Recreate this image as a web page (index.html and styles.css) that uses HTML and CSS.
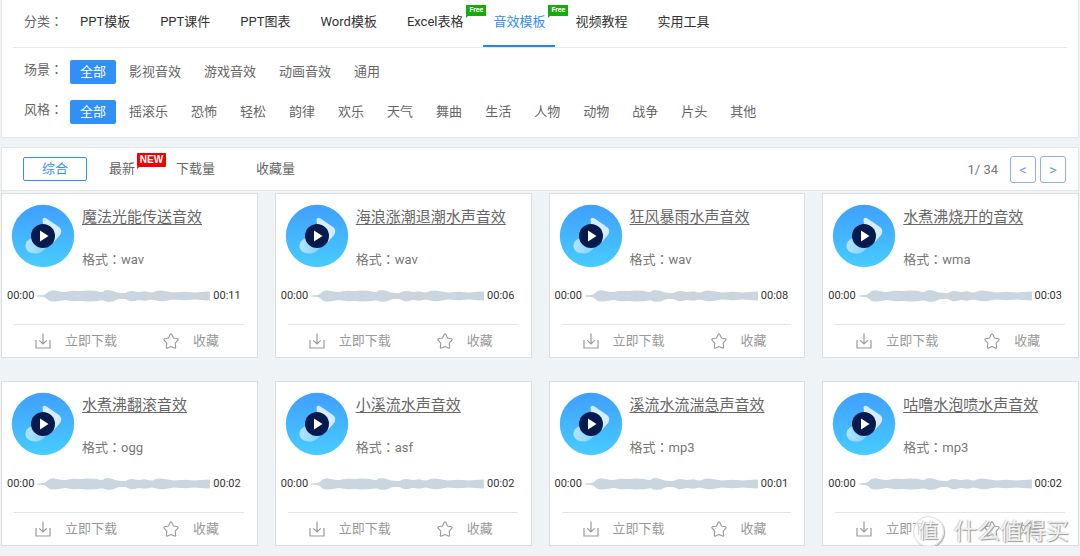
FILE: index.html
```html
<!DOCTYPE html>
<html lang="zh-CN">
<head>
<meta charset="utf-8">
<meta name="viewport" content="width=device-width, initial-scale=1">
<title>音效模板</title>
<link rel="stylesheet" href="styles.css">
</head>
<body>
<svg class="defs" aria-hidden="true">
  <defs>
    <linearGradient id="disc-fill" x1="0" y1="0" x2="0" y2="1">
      <stop offset="0" stop-color="#409fff"/>
      <stop offset="1" stop-color="#47ccff"/>
    </linearGradient>
    <linearGradient id="note-low" x1="1" y1="0" x2="0" y2="0">
      <stop offset="0" stop-color="#7fd0ff"/>
      <stop offset="1" stop-color="#b3e4ff"/>
    </linearGradient>
    <symbol id="disc" viewBox="0 0 64 64">
      <circle cx="32" cy="32" r="31.2" fill="url(#disc-fill)"/>
      <path d="M14.500 42c0-5 4-8 9-8l11 5c2 1 2 2 1 4-3 4-6 6.500-11 6.500-6 0-10-3-10-7.500z" fill="url(#note-low)"/>
      <path d="M31.500 16c0-2 2-3 4-1.500l12.500 8.500c2.500 2 3 5 1 8l-6 7-10-11z" fill="#d5edff"/>
      <circle cx="32" cy="32" r="12" fill="#061a4e"/>
      <path d="M29 26.600v10.800l8.500-5.400z" fill="#fff"/>
    </symbol>
    <symbol id="wave" viewBox="0 0 172 12" preserveAspectRatio="none">
      <path fill="#c9d6df" d="M0 5.500L6 5Q9 4.500 10 3 12 .2 16 .3L20 1Q24 2 28 2 32 1 36 .8L44 1 50 .6 58 .8Q62 2 65 2 67 .1 70 .1 75 .4 78 2 81 3 88 3 91 .8 95 .9L101 2 108 1.300Q111 2.500 115 2.500 119 .3 123 .5L130 1.500 136 2.500 147 1.800 157 2.500 166 1.800 172 1.500V10.500L166 10.200 157 9.500 147 10.200 136 9.500 130 10.500Q126 11.600 122 11.300L114 9.500 108 10.700 101 10Q96 11.400 93 11.200L88 9H82Q78 10 76 11.200 71 12 69 11.700L65 10.200 58 11.300 50 11.500 44 11 36 11.200 28 10 20 11.200Q14 12 12 10.700L10 9Q9 7.500 6 7L0 6.500z"/>
    </symbol>
    <symbol id="download" viewBox="0 0 16 16">
      <path d="M1 7v8h14V7M8 .5v10.300M4.300 7.300L8 11l3.700-3.700" fill="none" stroke="#999" stroke-width="1.200"/>
    </symbol>
    <symbol id="star" viewBox="0 0 16 16">
      <path d="M7.300 1.300q.7-.9 1.400 0L10.500 5l4 .8q1.100.4.4 1.400l-2.700 3 .5 4q0 1.200-1.100.9L8 13.400l-3.600 1.700q-1.100.3-1.100-.9l.5-4-2.700-3q-.7-1 .4-1.400l4-.8z" fill="none" stroke="#999" stroke-width="1.100" stroke-linejoin="round"/>
    </symbol>
  </defs>
</svg>

<section class="filters">
  <nav class="filter-row categories">
    <span class="label">分类<span class="colon">：</span></span>
    <a class="tab" href="#">PPT模板</a>
    <a class="tab" href="#">PPT课件</a>
    <a class="tab" href="#">PPT图表</a>
    <a class="tab" href="#">Word模板</a>
    <a class="tab" href="#">Excel表格<span class="badge free">Free</span></a>
    <a class="tab active" href="#">音效模板<span class="badge free">Free</span></a>
    <a class="tab" href="#">视频教程</a>
    <a class="tab" href="#">实用工具</a>
  </nav>
  <nav class="filter-row">
    <span class="label">场景<span class="colon">：</span></span>
    <a class="chip active" href="#">全部</a>
    <a class="chip" href="#">影视音效</a>
    <a class="chip" href="#">游戏音效</a>
    <a class="chip" href="#">动画音效</a>
    <a class="chip" href="#">通用</a>
  </nav>
  <nav class="filter-row">
    <span class="label">风格<span class="colon">：</span></span>
    <a class="chip active" href="#">全部</a>
    <a class="chip" href="#">摇滚乐</a>
    <a class="chip" href="#">恐怖</a>
    <a class="chip" href="#">轻松</a>
    <a class="chip" href="#">韵律</a>
    <a class="chip" href="#">欢乐</a>
    <a class="chip" href="#">天气</a>
    <a class="chip" href="#">舞曲</a>
    <a class="chip" href="#">生活</a>
    <a class="chip" href="#">人物</a>
    <a class="chip" href="#">动物</a>
    <a class="chip" href="#">战争</a>
    <a class="chip" href="#">片头</a>
    <a class="chip" href="#">其他</a>
  </nav>
</section>

<section class="sortbar">
  <a class="sort active" href="#">综合</a>
  <a class="sort" href="#">最新<span class="badge new">NEW</span></a>
  <a class="sort" href="#">下载量</a>
  <a class="sort" href="#">收藏量</a>
  <div class="pager">
    <span class="page">1/ 34</span>
    <button class="page-btn" type="button" aria-label="上一页">&lt;</button>
    <button class="page-btn" type="button" aria-label="下一页">&gt;</button>
  </div>
</section>

<main class="cards">
  <article class="card">
    <div class="head">
      <button class="play" type="button" aria-label="播放"><svg class="disc"><use href="#disc"/></svg></button>
      <div class="info"><a class="title" href="#">魔法光能传送音效</a><p class="format">格式<span class="colon">：</span>wav</p></div>
    </div>
    <div class="track"><span>00:00</span><svg class="wave"><use href="#wave"/></svg><span>00:11</span></div>
    <div class="actions">
      <button class="action" type="button"><svg class="icon"><use href="#download"/></svg>立即下载</button>
      <button class="action" type="button"><svg class="icon"><use href="#star"/></svg>收藏</button>
    </div>
  </article>
  <article class="card">
    <div class="head">
      <button class="play" type="button" aria-label="播放"><svg class="disc"><use href="#disc"/></svg></button>
      <div class="info"><a class="title" href="#">海浪涨潮退潮水声音效</a><p class="format">格式<span class="colon">：</span>wav</p></div>
    </div>
    <div class="track"><span>00:00</span><svg class="wave"><use href="#wave"/></svg><span>00:06</span></div>
    <div class="actions">
      <button class="action" type="button"><svg class="icon"><use href="#download"/></svg>立即下载</button>
      <button class="action" type="button"><svg class="icon"><use href="#star"/></svg>收藏</button>
    </div>
  </article>
  <article class="card">
    <div class="head">
      <button class="play" type="button" aria-label="播放"><svg class="disc"><use href="#disc"/></svg></button>
      <div class="info"><a class="title" href="#">狂风暴雨水声音效</a><p class="format">格式<span class="colon">：</span>wav</p></div>
    </div>
    <div class="track"><span>00:00</span><svg class="wave"><use href="#wave"/></svg><span>00:08</span></div>
    <div class="actions">
      <button class="action" type="button"><svg class="icon"><use href="#download"/></svg>立即下载</button>
      <button class="action" type="button"><svg class="icon"><use href="#star"/></svg>收藏</button>
    </div>
  </article>
  <article class="card">
    <div class="head">
      <button class="play" type="button" aria-label="播放"><svg class="disc"><use href="#disc"/></svg></button>
      <div class="info"><a class="title" href="#">水煮沸烧开的音效</a><p class="format">格式<span class="colon">：</span>wma</p></div>
    </div>
    <div class="track"><span>00:00</span><svg class="wave"><use href="#wave"/></svg><span>00:03</span></div>
    <div class="actions">
      <button class="action" type="button"><svg class="icon"><use href="#download"/></svg>立即下载</button>
      <button class="action" type="button"><svg class="icon"><use href="#star"/></svg>收藏</button>
    </div>
  </article>
  <article class="card">
    <div class="head">
      <button class="play" type="button" aria-label="播放"><svg class="disc"><use href="#disc"/></svg></button>
      <div class="info"><a class="title" href="#">水煮沸翻滚音效</a><p class="format">格式<span class="colon">：</span>ogg</p></div>
    </div>
    <div class="track"><span>00:00</span><svg class="wave"><use href="#wave"/></svg><span>00:02</span></div>
    <div class="actions">
      <button class="action" type="button"><svg class="icon"><use href="#download"/></svg>立即下载</button>
      <button class="action" type="button"><svg class="icon"><use href="#star"/></svg>收藏</button>
    </div>
  </article>
  <article class="card">
    <div class="head">
      <button class="play" type="button" aria-label="播放"><svg class="disc"><use href="#disc"/></svg></button>
      <div class="info"><a class="title" href="#">小溪流水声音效</a><p class="format">格式<span class="colon">：</span>asf</p></div>
    </div>
    <div class="track"><span>00:00</span><svg class="wave"><use href="#wave"/></svg><span>00:02</span></div>
    <div class="actions">
      <button class="action" type="button"><svg class="icon"><use href="#download"/></svg>立即下载</button>
      <button class="action" type="button"><svg class="icon"><use href="#star"/></svg>收藏</button>
    </div>
  </article>
  <article class="card">
    <div class="head">
      <button class="play" type="button" aria-label="播放"><svg class="disc"><use href="#disc"/></svg></button>
      <div class="info"><a class="title" href="#">溪流水流湍急声音效</a><p class="format">格式<span class="colon">：</span>mp3</p></div>
    </div>
    <div class="track"><span>00:00</span><svg class="wave"><use href="#wave"/></svg><span>00:01</span></div>
    <div class="actions">
      <button class="action" type="button"><svg class="icon"><use href="#download"/></svg>立即下载</button>
      <button class="action" type="button"><svg class="icon"><use href="#star"/></svg>收藏</button>
    </div>
  </article>
  <article class="card">
    <div class="head">
      <button class="play" type="button" aria-label="播放"><svg class="disc"><use href="#disc"/></svg></button>
      <div class="info"><a class="title" href="#">咕噜水泡喷水声音效</a><p class="format">格式<span class="colon">：</span>mp3</p></div>
    </div>
    <div class="track"><span>00:00</span><svg class="wave"><use href="#wave"/></svg><span>00:02</span></div>
    <div class="actions">
      <button class="action" type="button"><svg class="icon"><use href="#download"/></svg>立即下载</button>
      <button class="action" type="button"><svg class="icon"><use href="#star"/></svg>收藏</button>
    </div>
    <div class="watermark"><span class="seal">值</span><span>什么值得买</span></div>
  </article>
</main>
</body>
</html>
```

FILE: styles.css
```css
* {
  box-sizing: border-box;
}

body {
  margin: 0;
  padding: 0 1px;
  background: #eff3f5;
  color: #666;
  font: 13px/24px Roboto, "Noto Sans CJK SC", sans-serif;
}

a {
  color: inherit;
  text-decoration: none;
}

button {
  padding: 0;
  border: 0;
  background: none;
  color: inherit;
  font: inherit;
  cursor: pointer;
}

p {
  margin: 0;
}

.defs {
  position: absolute;
  width: 0;
  height: 0;
}

/* Full-width colon centred in its cell */
.colon {
  font-family: "Noto Sans CJK TC", sans-serif;
  font-feature-settings: "locl" 0;
  line-height: 1;
}

/* Filters */
.filters {
  padding: 0 11px 13px;
  border: 1px solid #e3e6e8;
  border-top: 0;
  background: #fff;
}

.filter-row {
  display: flex;
  gap: 3px;
  padding-left: 11px;
  margin-top: 16px;
}

.filter-row.categories {
  gap: 10px;
  margin: 0;
  border-bottom: 1px solid #e8e8e8;
}

.categories + .filter-row {
  margin-top: 12px;
}

.label {
  width: 43px;
  margin-top: -2px;
  white-space: nowrap;
}

.categories .label {
  width: 36px;
  margin-top: 10px;
}

.tab {
  position: relative;
  padding: 10px 10px 11px;
  border-bottom: 2px solid transparent;
  color: #333;
}

.tab.active {
  border-color: #1e87f0;
  color: #3190f7;
}

.chip {
  padding: 0 10px;
  border-radius: 2px;
}

.chip.active {
  background: #3190f7;
  color: #fff;
}

.badge {
  position: absolute;
  color: #fff;
  font-weight: 700;
  text-align: center;
}

.badge::after {
  content: "";
  position: absolute;
  top: 100%;
  left: 0;
  border: 1px solid transparent;
  border-top-color: inherit;
  border-left-color: inherit;
}

.free {
  top: 5px;
  right: -13px;
  width: 20px;
  border-color: #18a90a;
  background: #18a90a;
  font-size: 7px;
  line-height: 11px;
}

.new {
  top: -4px;
  right: -31px;
  width: 29px;
  border-color: #f40000;
  border-radius: 1px;
  background: #f40000;
  font-family: "Liberation Sans", sans-serif;
  font-size: 10px;
  line-height: 14px;
}

/* Sort bar */
.sortbar {
  display: flex;
  align-items: center;
  margin: 9px 0 2px;
  padding: 8px 12px 7px 21px;
  border: 1px solid #e3e6e8;
  background: #fff;
}

.sort {
  position: relative;
  margin: 0 41px 1px 0;
}

.sort.active {
  margin-right: 22px;
  padding: 0 18px;
  border: 1px solid #3190f7;
  border-radius: 2px;
  color: #3190f7;
  line-height: 22px;
}

.pager {
  display: flex;
  align-items: center;
  gap: 4px;
  margin-left: auto;
}

.page {
  margin-right: 8px;
  color: #777;
}

.page-btn {
  width: 26px;
  height: 27px;
  border: 1px solid #8faee8;
  border-radius: 3px;
  color: #7c9fe2;
  font-size: 15px;
}

/* Sound cards */
.cards {
  display: grid;
  grid-template-columns: repeat(4, minmax(0, 1fr));
  gap: 23px 17px;
}

.card {
  position: relative;
  padding: 10px 13px 4px 5px;
  border: 1px solid #dcdfe1;
  background: #fff;
}

.head {
  display: flex;
  gap: 7px;
  padding-left: 4px;
}

.play,
.disc {
  display: block;
  width: 64px;
  height: 64px;
}

.info {
  padding-top: 1px;
  white-space: nowrap;
}

.title {
  font-size: 15px;
  text-decoration: underline;
  text-underline-offset: 2px;
}

.format {
  margin-top: 18px;
  color: #777;
}

.track {
  display: flex;
  align-items: center;
  gap: 3px;
  margin: 12px 3px 0 0;
  color: #333;
  font-size: 11px;
}

.wave {
  flex: 1;
  min-width: 0;
  height: 12px;
}

.actions {
  display: flex;
  gap: 46px;
  margin: 16px 0 0 7px;
  padding: 4px 0 0 21px;
  border-top: 1px solid #e3e3e3;
  color: #999;
}

.action {
  display: flex;
  align-items: center;
  gap: 14px;
}

.icon {
  width: 16px;
  height: 16px;
}

/* Watermark */
.watermark {
  position: absolute;
  right: 9px;
  bottom: -2px;
  display: flex;
  align-items: center;
  gap: 10px;
  color: #fffc;
  font-size: 23px;
  line-height: 30px;
  white-space: nowrap;
  text-shadow: 1px 1px 1px #999, -1px 0 1px #ccc;
}

.seal {
  width: 31px;
  height: 31px;
  border: 1px solid #ddd;
  border-radius: 50%;
  box-shadow: 1px 1px 1px #aaa;
  background: #fff9;
  font-size: 20px;
  line-height: 28px;
  text-align: center;
}
```
